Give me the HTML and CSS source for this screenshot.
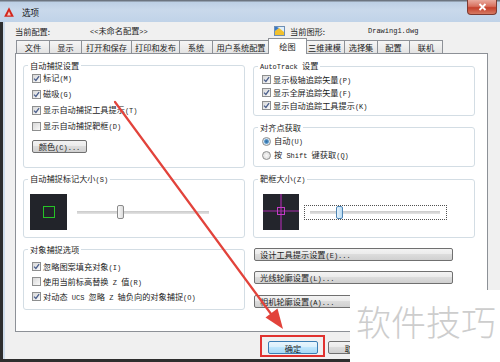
FILE: index.html
```html
<!DOCTYPE html>
<html lang="zh-CN">
<head>
<meta charset="utf-8">
<title>选项</title>
<link rel="stylesheet" href="styles.css">
</head>
<body>
<div class="win">
  <div class="titlebar">
    <svg class="logo" width="10" height="10" viewBox="0 0 10 10"><polygon points="5,0.3 9.9,9.7 0.1,9.7" fill="#d3261c"/><polygon points="5,4.2 6.9,8.4 3.1,8.4" fill="#f6c9c4"/></svg>
    <span class="title">选项</span>
    <div class="close"><svg width="9" height="8" viewBox="0 0 9 8"><path d="M1.5 1 L7.5 7 M7.5 1 L1.5 7" stroke="#fff" stroke-width="1.8"/></svg></div>
  </div>
  <div class="body">
    <div class="info">
      <span class="info-label first">当前配置:</span>
      <span class="info-value"><span class="l">&lt;&lt;</span>未命名配置<span class="l">&gt;&gt;</span></span>
      <svg class="dwg-icon" width="12" height="12" viewBox="0 0 12 12"><rect x="0.5" y="1.5" width="10" height="9" fill="#dfeefa" stroke="#6d8fb5"/><polygon points="1,10 1,6 5,3 10,7 10,10" fill="#f2c12e"/><polygon points="1,6 5,3 3,2 1,2" fill="#3a78c4"/></svg>
      <span class="info-label second">当前图形:</span>
      <span class="dwg-name">Drawing1.dwg</span>
    </div>
    <div class="tabs">
      <div class="tab t-file">文件</div>
      <div class="tab t-disp">显示</div>
      <div class="tab t-open">打开和保存</div>
      <div class="tab t-plot">打印和发布</div>
      <div class="tab t-sys">系统</div>
      <div class="tab t-user">用户系统配置</div>
      <div class="tab active t-draft">绘图</div>
      <div class="tab t-3d">三维建模</div>
      <div class="tab t-sel">选择集</div>
      <div class="tab t-prof">配置</div>
      <div class="tab t-online">联机</div>
    </div>
    <div class="panel">
      <div class="col">
        <fieldset class="grp g-autosnap">
          <legend>自动捕捉设置</legend>
          <div class="chk"><span class="box on"><svg viewBox="0 0 7 7"><path d="M1 3.6 L2.9 5.5 L6.1 1.2"/></svg></span><span class="txt">标记<span class="l">(M)</span></span></div>
          <div class="chk"><span class="box on"><svg viewBox="0 0 7 7"><path d="M1 3.6 L2.9 5.5 L6.1 1.2"/></svg></span><span class="txt">磁吸<span class="l">(G)</span></span></div>
          <div class="chk"><span class="box on"><svg viewBox="0 0 7 7"><path d="M1 3.6 L2.9 5.5 L6.1 1.2"/></svg></span><span class="txt">显示自动捕捉工具提示<span class="l">(T)</span></span></div>
          <div class="chk"><span class="box"></span><span class="txt">显示自动捕捉靶框<span class="l">(D)</span></span></div>
          <button class="btn color-btn"><span class="txt">颜色<span class="l">(C)...</span></span></button>
        </fieldset>
        <fieldset class="grp g-marker">
          <legend>自动捕捉标记大小<span class="l">(S)</span></legend>
          <div class="size-row">
            <div class="preview marker"><span class="green-box"></span></div>
            <div class="slider marker-slider"><span class="thumb"></span></div>
          </div>
        </fieldset>
        <fieldset class="grp g-osnap">
          <legend>对象捕捉选项</legend>
          <div class="chk tight"><span class="box on"><svg viewBox="0 0 7 7"><path d="M1 3.6 L2.9 5.5 L6.1 1.2"/></svg></span><span class="txt">忽略图案填充对象<span class="l">(I)</span></span></div>
          <div class="chk tight"><span class="box"></span><span class="txt">使用当前标高替换<span class="l"> Z </span>值<span class="l">(R)</span></span></div>
          <div class="chk tight"><span class="box on"><svg viewBox="0 0 7 7"><path d="M1 3.6 L2.9 5.5 L6.1 1.2"/></svg></span><span class="txt">对动态<span class="l"> UCS </span>忽略<span class="l"> Z </span>轴负向的对象捕捉<span class="l">(O)</span></span></div>
        </fieldset>
      </div>
      <div class="col">
        <fieldset class="grp g-track">
          <legend><span class="l">AutoTrack </span>设置</legend>
          <div class="chk small"><span class="box on"><svg viewBox="0 0 7 7"><path d="M1 3.6 L2.9 5.5 L6.1 1.2"/></svg></span><span class="txt">显示极轴追踪矢量<span class="l">(P)</span></span></div>
          <div class="chk small"><span class="box on"><svg viewBox="0 0 7 7"><path d="M1 3.6 L2.9 5.5 L6.1 1.2"/></svg></span><span class="txt">显示全屏追踪矢量<span class="l">(F)</span></span></div>
          <div class="chk small"><span class="box on"><svg viewBox="0 0 7 7"><path d="M1 3.6 L2.9 5.5 L6.1 1.2"/></svg></span><span class="txt">显示自动追踪工具提示<span class="l">(K)</span></span></div>
        </fieldset>
        <fieldset class="grp g-align">
          <legend>对齐点获取</legend>
          <div class="chk radio-row"><span class="radio on"></span><span class="txt">自动<span class="l">(U)</span></span></div>
          <div class="chk radio-row"><span class="radio"></span><span class="txt">按<span class="l"> Shift </span>键获取<span class="l">(Q)</span></span></div>
        </fieldset>
        <fieldset class="grp g-aperture">
          <legend>靶框大小<span class="l">(Z)</span></legend>
          <div class="size-row">
            <svg class="preview aperture" width="36" height="36" viewBox="0 0 36 36"><rect width="36" height="36" fill="#23252c"/><path d="M18 0 V36 M0 17 H36" stroke="#a52ca8" stroke-width="1.2"/><rect x="14.5" y="13.5" width="7" height="7" fill="none" stroke="#c33bc6" stroke-width="1"/></svg>
            <div class="focus-rect"><div class="slider ap-slider"><span class="thumb blue"></span></div></div>
          </div>
        </fieldset>
        <button class="btn wide first-wide"><span class="txt">设计工具提示设置<span class="l">(E)...</span></span></button>
        <button class="btn wide"><span class="txt">光线轮廓设置<span class="l">(L)...</span></span></button>
        <button class="btn wide third"><span class="txt">相机轮廓设置<span class="l">(A)...</span></span></button>
      </div>
    </div>
    <div class="footer">
      <button class="btn ok">确定</button>
      <button class="btn">取消</button>
    </div>
  </div>
  <svg class="arrow" width="500" height="362" viewBox="0 0 500 362">
    <line x1="115" y1="102" x2="274" y2="318" stroke="#e2433b" stroke-width="2.2" stroke-linecap="round"/>
    <polygon points="283,329 277.5,308.5 265.5,317.5" fill="#e2433b"/>
  </svg>
  <div class="redbox"></div>
  <div class="watermark">软件技巧</div>
</div>
</body>
</html>
```

FILE: styles.css
```css
html, body {
  margin: 0;
  padding: 0;
  background: #2e2e2e;
}

.win {
  position: relative;
  width: 500px;
  height: 362px;
  overflow: hidden;
  background: #2e2e2e;
  display: flex;
  flex-direction: column;
  font-family: "Noto Sans CJK SC", "Noto Sans", sans-serif;
  font-size: 8.2px;
  line-height: 10px;
  color: #1c1c1c;
}

.l {
  font-family: "Liberation Mono", "DejaVu Sans Mono", monospace;
  font-size: 7px;
  white-space: pre;
}

.txt {
  white-space: nowrap;
}

/* title bar */
.titlebar {
  height: 22px;
  flex: none;
  display: flex;
  align-items: flex-start;
  box-sizing: border-box;
  padding-left: 4px;
  background: linear-gradient(to bottom, #6c7580 0, #6c7580 1px, #bccfe4 2px, #c9d9eb 10px, #c0d3e8 22px);
}

.logo {
  margin-top: 7px;
}

.title {
  margin-left: 8px;
  margin-top: 7px;
  font-size: 8.6px;
  color: #111;
}

.close {
  margin-left: auto;
  margin-right: 3px;
  width: 30px;
  height: 15px;
  box-sizing: border-box;
  border: 1px solid #7c3a31;
  border-top: none;
  border-radius: 0 0 4px 4px;
  background: linear-gradient(to bottom, #e9aa9e 0, #d8705e 45%, #c4402c 55%, #d67a62 100%);
  display: flex;
  align-items: center;
  justify-content: center;
}

/* body */
.body {
  flex: 1;
  margin: 0 0 3px 3px;
  border-left: 2px solid #cfdcea;
  background: #f0f0f0;
  display: flex;
  flex-direction: column;
  padding: 3px 0 0 10px;
  min-height: 0;
}

.info {
  height: 12px;
  display: flex;
  align-items: center;
  flex: none;
}

.info-label.first { width: 75px; }
.info-value { width: 184px; }
.dwg-icon { margin-right: 4px; }
.info-label.second { width: 78px; }
.dwg-name {
  font-family: "Liberation Mono", monospace;
  font-size: 7px;
}

/* tabs */
.tabs {
  height: 16px;
  margin-top: 1px;
  margin-left: 1px;
  margin-bottom: -1px;
  display: flex;
  align-items: flex-end;
  position: relative;
  z-index: 1;
  flex: none;
}

.tab {
  height: 13px;
  margin-bottom: 1px;
  box-sizing: border-box;
  border: 1px solid #8d9197;
  border-bottom: none;
  border-left: none;
  background: linear-gradient(to bottom, #f6f6f6, #e3e3e3);
  display: flex;
  align-items: center;
  justify-content: center;
  white-space: nowrap;
  overflow: hidden;
}

.tab.t-file { border-left: 1px solid #8d9197; }

.tab.active {
  height: 16px;
  margin: 0 -2px 0 -2px;
  border-left: 1px solid #8d9197;
  background: #fff;
  position: relative;
  z-index: 2;
  align-items: flex-start;
  padding-top: 2px;
}

.t-file { width: 34px; }
.t-disp { width: 32px; }
.t-open { width: 50px; }
.t-plot { width: 48px; }
.t-sys { width: 33px; }
.t-user { width: 57px; }
.t-draft { width: 39px; }
.t-3d { width: 40px; }
.t-sel { width: 33px; }
.t-prof { width: 32px; }
.t-online { width: 33px; }

/* panel */
.panel {
  width: 473px;
  height: 279px;
  box-sizing: border-box;
  border: 1px solid #8d9197;
  background: #fff;
  display: flex;
  gap: 8px;
  padding: 6px 0 0 7px;
  flex: none;
}

.col {
  width: 222px;
  display: flex;
  flex-direction: column;
  align-items: flex-start;
}

.grp {
  margin: 0;
  padding: 0 8px;
  width: 222px;
  box-sizing: border-box;
  border: 1px solid #d3dde4;
  border-radius: 3px;
  min-width: 0;
}

.grp legend {
  padding: 0 2px;
  margin-left: -4px;
  line-height: 10px;
  white-space: nowrap;
}

.g-autosnap { height: 108px; }
.g-marker { height: 65px; margin-top: 5px; }
.g-osnap { height: 66px; margin-top: 6px; padding-top: 5px; }
.g-track { height: 56px; padding-top: 1px; }
.g-align { height: 45px; margin-top: 6px; padding-top: 2px; }
.g-aperture { height: 65px; margin-top: 6px; }

.chk {
  display: flex;
  align-items: center;
  height: 16px;
}
.chk.tight { height: 15px; }
.chk.small { height: 13px; }
.chk.radio-row { height: 14px; }

.box {
  width: 9px;
  height: 9px;
  box-sizing: border-box;
  border: 1px solid #8e8f8f;
  background: linear-gradient(135deg, #d8d8d8, #f9f9f9);
  margin-right: 2px;
  display: flex;
  align-items: center;
  justify-content: center;
  flex: none;
}

.box svg {
  width: 7px;
  height: 7px;
}

.box svg path {
  fill: none;
  stroke: #4b5f8c;
  stroke-width: 1.3;
}

.radio {
  width: 9px;
  height: 9px;
  box-sizing: border-box;
  border: 1px solid #8e8f8f;
  border-radius: 50%;
  background: radial-gradient(circle, #f8f8f8, #d6d6d6);
  margin-right: 3px;
  flex: none;
}

.radio.on {
  background: radial-gradient(circle, #2f6ea3 0, #4b8cc2 1.8px, #cfe3f3 2.8px, #e8e8e8 4px);
}

/* buttons */
.btn {
  font: inherit;
  color: inherit;
  height: 13px;
  box-sizing: border-box;
  border: 1px solid #707070;
  border-radius: 2px;
  background: linear-gradient(to bottom, #f3f3f3 0, #ebebeb 45%, #dcdcdc 50%, #d0d0d0 100%);
  padding: 0;
  display: flex;
  align-items: center;
  justify-content: center;
  white-space: nowrap;
  line-height: 10px;
}

.color-btn {
  width: 55px;
  margin-top: 6px;
}

.wide {
  width: 199px;
  margin-left: 1px;
  justify-content: flex-start;
  padding-left: 5px;
  margin-top: 10px;
}
.wide.third { margin-top: 11px; }

/* size previews */
.size-row {
  display: flex;
  align-items: center;
  padding-top: 9px;
}

.preview.marker {
  width: 37px;
  height: 36px;
  margin-left: -2px;
  background: #22242a;
  display: flex;
  align-items: center;
  justify-content: center;
}

.green-box {
  width: 12px;
  height: 12px;
  box-sizing: border-box;
  border: 1.5px solid #25c425;
}

.slider {
  height: 14px;
  display: flex;
  align-items: center;
  background: linear-gradient(to bottom, #c9c9c9, #e4e4e4) center / 100% 3px no-repeat;
}

.marker-slider {
  width: 132px;
  margin-left: 10px;
}

.thumb {
  width: 7px;
  height: 14px;
  box-sizing: border-box;
  border: 1px solid #8b8b8b;
  border-radius: 2px;
  background: linear-gradient(to right, #fafafa, #dcdcdc);
}

.marker-slider .thumb { margin-left: 40px; }

.preview.aperture {
  margin-left: 1px;
  display: block;
}

.focus-rect {
  width: 143px;
  height: 15px;
  margin-left: 5px;
  box-sizing: border-box;
  border: 1px dotted #505050;
  padding-left: 5px;
  display: flex;
  align-items: center;
}

.ap-slider { width: 130px; height: 13px; }

.thumb.blue {
  height: 13px;
  margin-left: 26px;
  border-color: #4f86b5;
  background: linear-gradient(to right, #e6f3fc, #b9dcf4);
}

/* footer */
.footer {
  display: flex;
  gap: 10px;
  margin-top: 9px;
  padding-left: 253px;
}

.footer .btn { width: 50px; }

.btn.ok {
  border-color: #3a7db3;
  background: linear-gradient(to bottom, #e8f5fd 0, #d9f0fc 45%, #bee6fd 50%, #a7d9f5 100%);
}

/* annotations */
.arrow {
  position: absolute;
  left: 0;
  top: 0;
  pointer-events: none;
}

.redbox {
  position: absolute;
  left: 260px;
  top: 335px;
  width: 65px;
  height: 22px;
  box-sizing: border-box;
  border: 2px solid #e1322f;
}

.watermark {
  position: absolute;
  left: 350px;
  top: 290px;
  right: 0;
  bottom: 0;
  background: #fff;
  box-sizing: border-box;
  padding: 13px 0 0 6px;
  font-size: 35px;
  line-height: 35px;
  font-weight: 300;
  color: #cdcdcd;
  white-space: nowrap;
}
```
